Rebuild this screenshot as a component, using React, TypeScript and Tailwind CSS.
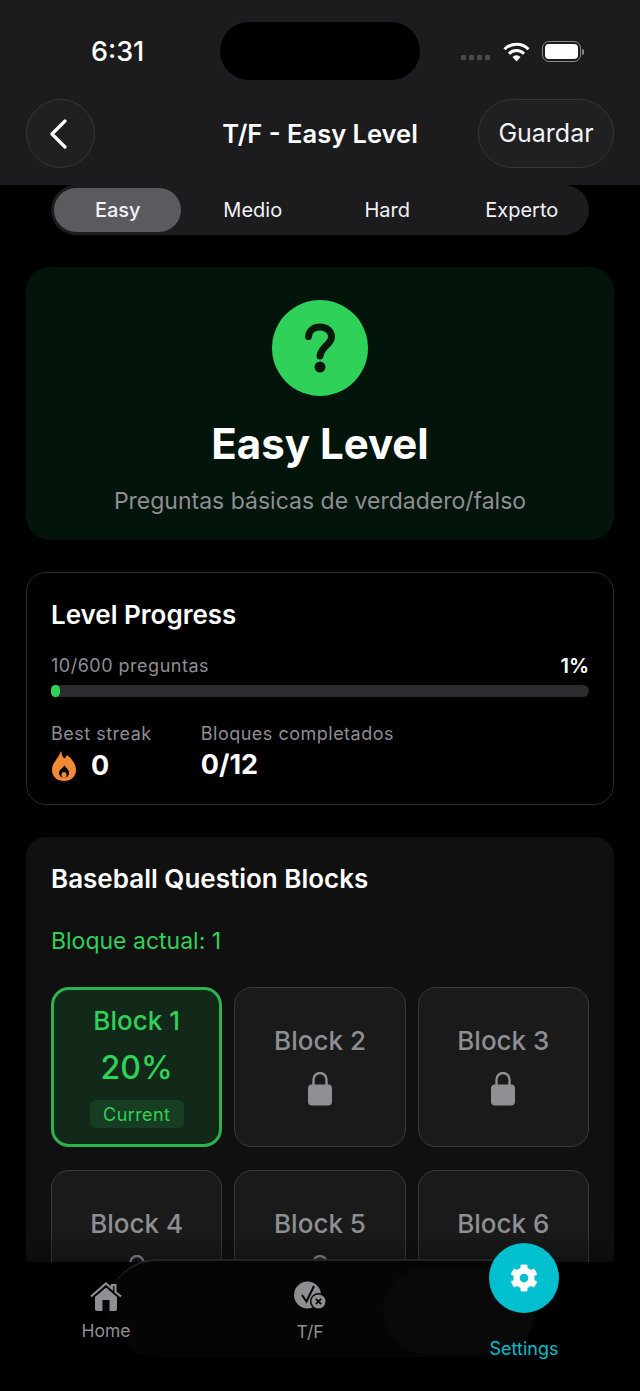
import { FaCog } from 'react-icons/fa';

const tabs = ['Easy', 'Medio', 'Hard', 'Experto'];
const lockedBlocks = [2, 3, 4, 5, 6];

const Lock = () => (
  <svg width="24" height="34" viewBox="0 0 24 34" className="block">
    <path d="M5.500 15V7.500a6.500 6.500 0 0 1 13 0V15" fill="none" stroke="#8e8e93" strokeWidth="2.400" />
    <rect x="0" y="12.500" width="24" height="21" rx="4" fill="#8e8e93" />
  </svg>
);

const Flame = () => (
  <svg width="24" height="30" viewBox="0 0 24 30" className="block">
    <path
      d="M9 0c1 3 .6 5 3.500 7.500C14 5.800 14.500 5 14.800 4c5 3.500 9.200 9 9.200 15 0 6.500-5 11-12 11S0 25.500 0 19C0 13 3 11 5 7.500 6.500 5 8 3 9 0Z"
      fill="#f08a35"
    />
    <path d="M12.500 14c.5 2.500 4.500 4 4.500 8a5 5 0 0 1-10 0c0-3.500 4-4.500 5.500-8Z" fill="#000" />
    <ellipse cx="12" cy="24" rx="2.500" ry="3" fill="#f08a35" />
  </svg>
);

const Wifi = () => (
  <svg width="27" height="20" viewBox="0 0 27 20" className="block">
    <path d="M1.500 7.200a17 17 0 0 1 24 0" fill="none" stroke="#fff" strokeWidth="3" />
    <path d="M6 11.700a10.600 10.600 0 0 1 15 0" fill="none" stroke="#fff" strokeWidth="3" />
    <path d="M9.500 15 13.500 19.500 17.500 15a5.700 5.700 0 0 0-8 0Z" fill="#fff" />
  </svg>
);

const Battery = () => (
  <div className="flex items-center gap-[1px]">
    <div className="w-[39px] h-[21px] rounded-[7px] border border-[#8a8a8e] p-[2px]">
      <div className="w-full h-full rounded-[4px] bg-white" />
    </div>
    <div className="w-[2px] h-[6px] rounded-r-sm bg-[#8a8a8e]" />
  </div>
);

const HomeIcon = () => (
  <svg width="32" height="29" viewBox="0 0 32 29" className="block">
    <path d="M1 14.500 16 1.500l6 5.200V3h3.500v7L31 14.500" fill="none" stroke="#8e8e93" strokeWidth="2.200" />
    <path d="M5 15 16 5.500 27 15v12a2 2 0 0 1-2 2H7a2 2 0 0 1-2-2Z" fill="#8e8e93" />
    <rect x="12.500" y="18" width="7" height="11" fill="#050505" />
  </svg>
);

const TrueFalseIcon = () => (
  <svg width="33" height="29" viewBox="0 0 33 29" className="block">
    <circle cx="13.500" cy="14" r="13.500" fill="#8e8e93" />
    <path d="m8 14 4.500 6.500L20 5" fill="none" stroke="#050505" strokeWidth="2" />
    <circle cx="24.500" cy="20.500" r="8.500" fill="#050505" />
    <circle cx="24.500" cy="20.500" r="7" fill="#8e8e93" />
    <path d="m21.800 17.800 5.400 5.400m0-5.400-5.400 5.400" stroke="#050505" strokeWidth="1.800" />
  </svg>
);

const App = () => {
  return (
    <div className="relative w-[640px] h-[1391px] overflow-hidden bg-black flex flex-col font-['Inter',sans-serif] text-white">
      <header className="h-[185px] shrink-0 bg-[#1c1c1e] px-[26px]">
        <div className="h-[99px] flex items-start">
          <div className="w-[194px] pt-[35px] pl-[65px] text-[27px] leading-[34px] font-medium">6:31</div>
          <div className="w-[200px] h-[58px] mt-[22px] rounded-[29px] bg-black" />
          <div className="flex-1 flex items-center justify-end gap-[12px] pt-[41px] pr-[30px]">
            <div className="flex gap-[3px] mr-[1px] mt-[12px]">
              {[0, 1, 2, 3].map((i) => (
                <div key={i} className="w-[5px] h-[5px] rounded-[1px] bg-[#4a4a4e]" />
              ))}
            </div>
            <Wifi />
            <Battery />
          </div>
        </div>
        <div className="grid grid-cols-[136px_1fr_136px] items-center h-[69px]">
          <button className="w-[69px] h-[69px] rounded-full border border-[#36363a] bg-[#202022] flex items-center justify-center">
            <svg width="20" height="30" viewBox="0 0 20 30" className="mr-[6px]">
              <path d="M17 2 4 15l13 13" fill="none" stroke="#fff" strokeWidth="3.200" strokeLinecap="round" strokeLinejoin="round" />
            </svg>
          </button>
          <h1 className="text-center text-[25.500px] font-semibold leading-none">T/F - Easy Level</h1>
          <button className="h-[69px] rounded-full border border-[#36363a] bg-[#202022] text-[25px] text-[#f2f2f7]">
            Guardar
          </button>
        </div>
      </header>

      <main className="flex-1 min-h-0 overflow-hidden">
        <div className="mx-[51px] h-[50px] rounded-full bg-[#1c1c1e] grid grid-cols-4">
          {tabs.map((tab, i) => (
            <div key={tab} className="flex items-center justify-center">
              {i === 0 ? (
                <div className="w-[127px] h-[44px] rounded-full bg-[#5a5a5f] flex items-center justify-center text-[20px] font-medium text-[#f2f2f7] mr-[1px]">
                  {tab}
                </div>
              ) : (
                <span className="text-[20px] text-[#f2f2f7]">{tab}</span>
              )}
            </div>
          ))}
        </div>

        <section className="mx-[26px] mt-[32px] h-[273px] rounded-[24px] bg-[#03140a] flex flex-col items-center pt-[33px]">
          <div className="w-[96px] h-[96px] rounded-full bg-[#30d158] flex items-center justify-center">
            <svg width="32" height="50" viewBox="0 0 32 50">
              <path
                d="M4.500 13.500C5 7.500 10 4 16 4c6.500 0 11.500 4 11.500 10 0 7.500-10.500 9.500-11.500 19"
                fill="none"
                stroke="#06180c"
                strokeWidth="7"
                strokeLinecap="round"
              />
              <circle cx="16" cy="44" r="5.500" fill="#06180c" />
            </svg>
          </div>
          <h2 className="mt-[20px] text-[42px] leading-[56px] font-bold">Easy Level</h2>
          <p className="mt-[15px] text-[23px] leading-[28px] text-[#8e8e93]">Preguntas básicas de verdadero/falso</p>
        </section>

        <section className="mx-[26px] mt-[32px] h-[233px] rounded-[20px] border border-[#2c2c2e] px-[24px] pt-[27px]">
          <h3 className="text-[26px] leading-[30px] font-semibold">Level Progress</h3>
          <div className="mt-[25px] flex items-center justify-between text-[18px] leading-[22px]">
            <span className="text-[#8e8e93] tracking-[0.5px]">10/600 preguntas</span>
            <span className="text-[20px] font-semibold">1%</span>
          </div>
          <div className="mt-[8px] h-[12px] rounded-full bg-[#2c2c2e]">
            <div className="w-[9px] h-full rounded-full bg-[#30d158]" />
          </div>
          <div className="mt-[26px] flex gap-[49px]">
            <div>
              <div className="text-[18px] leading-[22px] text-[#8e8e93] tracking-[0.5px]">Best streak</div>
              <div className="mt-[5px] flex items-center gap-[15px] h-[32px] pl-[1px]">
                <Flame />
                <span className="text-[27px] font-bold">0</span>
              </div>
            </div>
            <div>
              <div className="text-[18px] leading-[22px] text-[#8e8e93] tracking-[0.5px]">Bloques completados</div>
              <div className="mt-[4px] h-[32px] flex items-center text-[27px] font-bold">0/12</div>
            </div>
          </div>
        </section>

        <section className="mx-[26px] mt-[32px] h-[500px] rounded-[20px] bg-[#101011] px-[25px] pt-[27px]">
          <h3 className="text-[26px] leading-[30px] font-semibold">Baseball Question Blocks</h3>
          <p className="mt-[33px] text-[23px] leading-[28px] text-[#30d158]">Bloque actual: 1</p>
          <div className="mt-[32px] grid grid-cols-3 gap-x-[12px] gap-y-[23px]">
            <div className="h-[160px] rounded-[18px] border-[3px] border-[#2ab34e] bg-[#12291a] flex flex-col items-center pt-[15px]">
              <span className="text-[26px] leading-[32px] font-medium text-[#30d158]">Block 1</span>
              <span className="mt-[13px] text-[32px] leading-[36px] font-medium text-[#30d158]">20%</span>
              <span className="mt-[14px] w-[94px] h-[28px] rounded-[6px] bg-[#173d23] flex items-center justify-center text-[18px] tracking-[0.4px] text-[#30d158]">
                Current
              </span>
            </div>
            {lockedBlocks.map((n) => (
              <div
                key={n}
                className="h-[160px] rounded-[18px] border border-[#3a3a3c] bg-[#1a1a1b] flex flex-col items-center pt-[37px]"
              >
                <span className="text-[26px] leading-[32px] font-medium text-[#8e8e93]">Block {n}</span>
                <div className="mt-[15px]">
                  <Lock />
                </div>
              </div>
            ))}
          </div>
        </section>
      </main>

      <nav className="relative h-[129px] shrink-0 bg-black">
        <div className="absolute left-0 right-0 -top-[30px] h-[30px] bg-gradient-to-b from-transparent to-black/30 pointer-events-none" />
        <div className="absolute left-[108px] right-[105px] -top-[3px] bottom-[34px] rounded-[50px] bg-[#050505] border-t-2 border-[#242426]" />
        <div className="absolute left-[383px] w-[152px] top-[6px] h-[86px] rounded-[43px] bg-[#090909]" />
        <div className="relative flex items-start h-full">
          <div className="w-[212px] flex flex-col items-center pt-[20px]">
            <HomeIcon />
            <span className="mt-[9px] text-[17.500px] leading-[22px] text-[#8e8e93]">Home</span>
          </div>
          <div className="w-[196px] flex flex-col items-center pt-[19px]">
            <TrueFalseIcon />
            <span className="mt-[11px] text-[17.500px] leading-[22px] text-[#8e8e93]">T/F</span>
          </div>
          <div className="ml-[81px] w-[70px] flex flex-col items-center -mt-[19px]">
            <div className="w-[70px] h-[70px] rounded-full bg-[#00bfcf] flex items-center justify-center">
              <FaCog size={28} color="#fff" />
            </div>
            <span className="mt-[25px] text-[18px] leading-[22px] text-[#00bfcf] whitespace-nowrap">Settings</span>
          </div>
        </div>
      </nav>
    </div>
  );
};

export default App;
